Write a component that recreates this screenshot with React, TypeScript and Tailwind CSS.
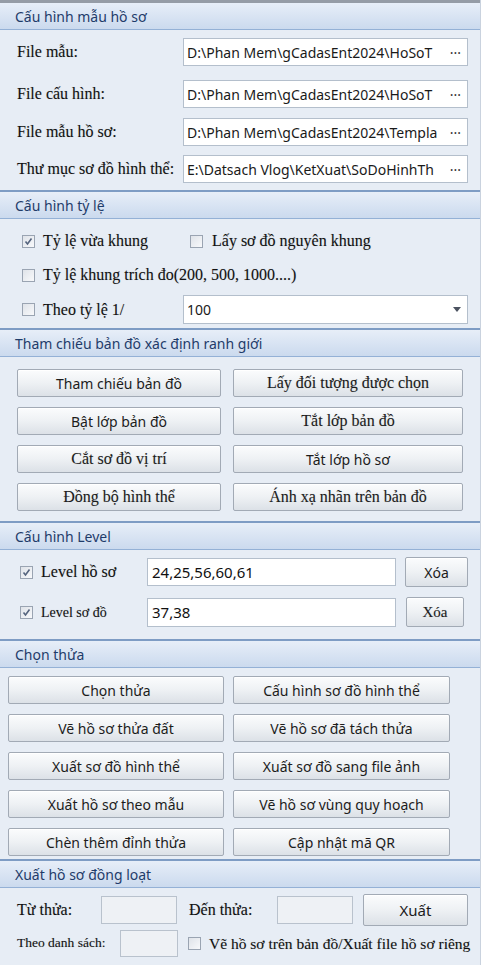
import React from 'react'

const sans = "font-['Noto_Sans',_'Open_Sans',_sans-serif]"
const serif = "font-['Liberation_Serif',_'DejaVu_Serif',_serif] [text-shadow:0_0_1px_rgba(0,0,0,0.2)]"

function Section({ title, first, children }: { title: string; first?: boolean; children: React.ReactNode }) {
  return (
    <section className={first ? 'border-t-[3px] border-[#959ca6]' : 'border-t-2 border-[#7e9cc4]'}>
      <div className="h-[27px] flex items-center px-[15px] bg-gradient-to-b from-[#e7eef8] to-[#cbdaee] border-b border-[#94b1d6]">
        <span className={`${sans} text-[14px] text-[#1f3c6a]`}>{title}</span>
      </div>
      {children}
    </section>
  )
}

function Btn({ label, serifText, className = '' }: { label: string; serifText?: boolean; className?: string }) {
  return (
    <button
      className={`h-[28px] rounded-[2px] border border-[#a2aab5] bg-gradient-to-b from-[#fbfcfd] via-[#eef1f4] to-[#dce1e7] shadow-[inset_0_1px_0_#fff] text-[#1c1c1c] whitespace-nowrap ${
        serifText ? `${serif} text-[16px]` : `${sans} text-[14px]`
      } ${className}`}
    >
      {label}
    </button>
  )
}

function Check({ checked }: { checked?: boolean }) {
  return (
    <span className="w-[13px] h-[13px] shrink-0 border border-[#9aa4b2] bg-gradient-to-br from-[#dfe3e9] to-[#f8f9fb] flex items-center justify-center">
      {checked && (
        <svg width="9" height="9" viewBox="0 0 9 9">
          <path d="M1.5 4.5 L3.5 7 L7.5 1.5" fill="none" stroke="#55647e" strokeWidth="1.6" />
        </svg>
      )}
    </span>
  )
}

function PathInput({ value }: { value: string }) {
  return (
    <div className="w-[285px] h-[28px] bg-white border border-[#b4bfcc] flex items-center pl-[3px] pr-[6px]">
      <span className={`${sans} text-[14px] text-[#1a1a1a] whitespace-nowrap flex-1`}>{value}</span>
      <span className={`${sans} text-[14px] text-[#333] ml-[6px] leading-none pb-[6px]`}>...</span>
    </div>
  )
}

export default function App() {
  const fileRows = [
    { label: 'File mẫu:', value: 'D:\\Phan Mem\\gCadasEnt2024\\HoSoT', mt: 'mt-[8px]' },
    { label: 'File cấu hình:', value: 'D:\\Phan Mem\\gCadasEnt2024\\HoSoT', mt: 'mt-[14px]' },
    { label: 'File mẫu hồ sơ:', value: 'D:\\Phan Mem\\gCadasEnt2024\\Templa', mt: 'mt-[10px]' },
    { label: 'Thư mục sơ đồ hình thể:', value: 'E:\\Datsach Vlog\\KetXuat\\SoDoHinhTh', mt: 'mt-[9px]' },
  ]

  return (
    <div className="w-[481px] h-[965px] overflow-hidden bg-[#e7edf5] border-r border-[#c9d2de]">
      <Section title="Cấu hình mẫu hồ sơ" first>
        <div className="pb-[7px]">
          {fileRows.map((r) => (
            <div key={r.label} className={`flex items-center ${r.mt}`}>
              <span className={`${serif} text-[16px] text-[#111] w-[183px] pl-[17px] whitespace-nowrap`}>{r.label}</span>
              <PathInput value={r.value} />
            </div>
          ))}
        </div>
      </Section>

      <Section title="Cấu hình tỷ lệ">
        <div className={`${serif} text-[16px] text-[#111] pt-[12px] pb-[4px]`}>
          <div className="flex items-center h-[20px]">
            <div className="flex items-center gap-[8px] pl-[22px] w-[190px]">
              <Check checked />
              <span>Tỷ lệ vừa khung</span>
            </div>
            <div className="flex items-center gap-[9px]">
              <Check />
              <span>Lấy sơ đồ nguyên khung</span>
            </div>
          </div>
          <div className="flex items-center gap-[8px] pl-[22px] h-[20px] mt-[14px]">
            <Check />
            <span>Tỷ lệ khung trích đo(200, 500, 1000....)</span>
          </div>
          <div className="flex items-center mt-[10px]">
            <div className="flex items-center gap-[8px] pl-[22px] w-[183px]">
              <Check />
              <span>Theo tỷ lệ 1/</span>
            </div>
            <div className="w-[285px] h-[29px] bg-white border border-[#b4bfcc] flex items-center pl-[3px] pr-[6px] [text-shadow:none]">
              <span className={`${sans} flex-1 text-[14px] text-[#1a1a1a] [text-shadow:none]`}>100</span>
              <svg width="8" height="5" viewBox="0 0 8 5">
                <path d="M0 0 H8 L4 5 Z" fill="#4b5260" />
              </svg>
            </div>
          </div>
        </div>
      </Section>

      <Section title="Tham chiếu bản đồ xác định ranh giới">
        <div className="grid grid-cols-[204px_230px] gap-x-[12px] gap-y-[10px] pl-[17px] pt-[12px] pb-[10px]">
          <Btn label="Tham chiếu bản đồ" />
          <Btn label="Lấy đối tượng được chọn" serifText />
          <Btn label="Bật lớp bản đồ" />
          <Btn label="Tắt lớp bản đồ" serifText />
          <Btn label="Cắt sơ đồ vị trí" serifText />
          <Btn label="Tắt lớp hồ sơ" />
          <Btn label="Đồng bộ hình thể" serifText />
          <Btn label="Ánh xạ nhãn trên bản đồ" serifText />
        </div>
      </Section>

      <Section title="Cấu hình Level">
        <div className={`${serif} text-[#111] pt-[7px] pb-[12px]`}>
          <div className="flex items-center h-[30px]">
            <div className="flex items-center gap-[8px] pl-[20px] w-[147px] text-[16px]">
              <Check checked />
              <span>Level hồ sơ</span>
            </div>
            <div className={`${sans} w-[249px] h-[28px] bg-white border border-[#b4bfcc] flex items-center pl-[4px] text-[15px] [text-shadow:none]`}>
              24,25,56,60,61
            </div>
            <Btn label="Xóa" className="ml-[9px] w-[63px] h-[30px] [text-shadow:none]" />
          </div>
          <div className="flex items-center h-[30px] mt-[10px]">
            <div className="flex items-center gap-[8px] pl-[20px] w-[147px] text-[14px]">
              <Check checked />
              <span>Level sơ đồ</span>
            </div>
            <div className={`${sans} w-[249px] h-[29px] bg-white border border-[#b4bfcc] flex items-center pl-[4px] text-[15px] [text-shadow:none]`}>
              37,38
            </div>
            <Btn label="Xóa" serifText className="ml-[10px] w-[58px] h-[30px] !text-[15px]" />
          </div>
        </div>
      </Section>

      <Section title="Chọn thửa">
        <div className="grid grid-cols-[216px_217px] gap-x-[9px] gap-y-[10px] pl-[8px] pt-[8px] pb-[3px]">
          <Btn label="Chọn thửa" />
          <Btn label="Cấu hình sơ đồ hình thể" />
          <Btn label="Vẽ hồ sơ thửa đất" />
          <Btn label="Vẽ hồ sơ đã tách thửa" />
          <Btn label="Xuất sơ đồ hình thể" />
          <Btn label="Xuất sơ đồ sang file ảnh" />
          <Btn label="Xuất hồ sơ theo mẫu" />
          <Btn label="Vẽ hồ sơ vùng quy hoạch" />
          <Btn label="Chèn thêm đỉnh thửa" />
          <Btn label="Cập nhật mã QR" />
        </div>
      </Section>

      <Section title="Xuất hồ sơ đồng loạt">
        <div className={`${serif} text-[#111] pt-[6px]`}>
          <div className="flex items-center">
            <span className="w-[101px] pl-[17px] text-[16px]">Từ thửa:</span>
            <div className="w-[76px] h-[28px] bg-[#eef1f5] border border-[#b9c2cd]" />
            <span className="w-[100px] pl-[12px] text-[16px]">Đến thửa:</span>
            <div className="w-[76px] h-[28px] bg-[#eef1f5] border border-[#b9c2cd]" />
            <Btn label="Xuất" className="ml-[10px] w-[105px] h-[32px] [text-shadow:none] !text-[15px]" />
          </div>
          <div className="flex items-center mt-[4px]">
            <span className="w-[120px] pl-[17px] text-[13.5px] whitespace-nowrap">Theo danh sách:</span>
            <div className="w-[58px] h-[27px] bg-[#eef1f5] border border-[#b9c2cd]" />
            <div className="flex items-center gap-[8px] pl-[10px] text-[15.5px] whitespace-nowrap">
              <Check />
              <span>Vẽ hồ sơ trên bản đồ/Xuất file hồ sơ riêng</span>
            </div>
          </div>
        </div>
      </Section>
    </div>
  )
}
